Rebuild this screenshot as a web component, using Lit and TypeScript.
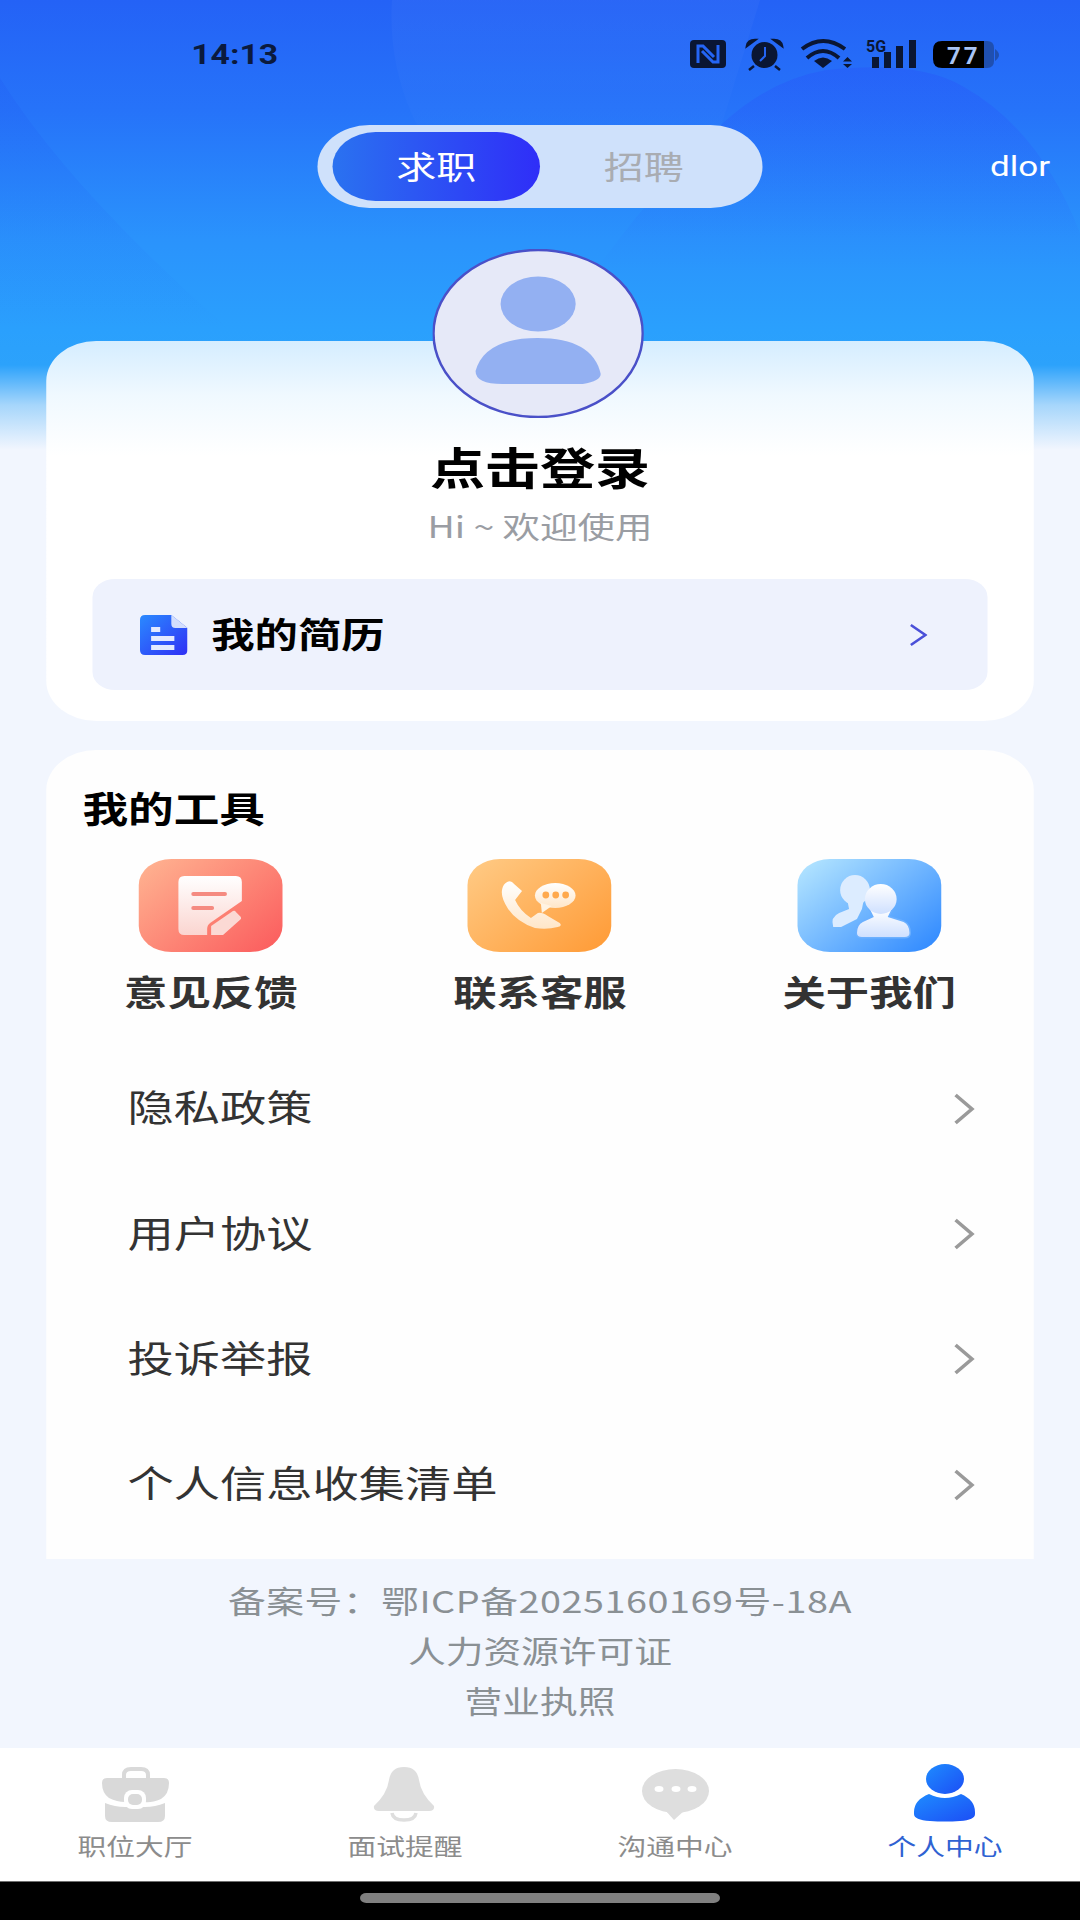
import { LitElement, html, css } from 'lit';
import { customElement } from 'lit/decorators.js';

// The reference is a tall phone capture squeezed to 1080x1920, so everything looks
// 1.25x wider than tall. The page is laid out at 864px and stretched back on :host.
// Icon viewBoxes are in real screen pixels, with preserveAspectRatio none.

const docIcon = html`<svg class="doc-icon" viewBox="0 0 47 40" preserveAspectRatio="none">
  <defs><linearGradient id="docFill" x1="0" y1="0" x2="1" y2="1">
    <stop offset="0" stop-color="#2a8aff"/><stop offset="1" stop-color="#3030f5"/>
  </linearGradient></defs>
  <path d="M5 0H31L47 13V35Q47 40 42 40H5Q0 40 0 35V5Q0 0 5 0Z" fill="url(#docFill)"/>
  <path d="M31 0L47 13H35Q31 13 31 9Z" fill="#d3defd"/>
  <rect x="11" y="12" width="9" height="5" fill="#e3e9ff"/>
  <rect x="11" y="21" width="23" height="5" fill="#e3e9ff"/>
  <rect x="11" y="30" width="23" height="5" fill="#e3e9ff"/>
</svg>`;

const tools = [
  {
    label: '意见反馈',
    cls: 'red',
    icon: html`<svg class="tile-art" viewBox="0 0 145 93" preserveAspectRatio="none">
      <defs><linearGradient id="paperRed" x1="0" y1="0" x2="0" y2="1">
        <stop offset="0" stop-color="#fff"/><stop offset="1" stop-color="#fbd5d0"/>
      </linearGradient></defs>
      <path d="M46 17H98Q104 17 104 23V42L72 64Q69 66 69 70V76H46Q40 76 40 70V23Q40 17 46 17Z" fill="url(#paperRed)"/>
      <path d="M55 35H87M55 49H74" stroke="#f58a80" stroke-width="4" stroke-linecap="round" fill="none"/>
      <path d="M73 76V67L95 52Q97 51 98 53L103 58Q104 60 102 61L85 76Z" fill="#fbd9d4"/>
    </svg>`,
  },
  {
    label: '联系客服',
    cls: 'orange',
    icon: html`<svg class="tile-art" viewBox="0 0 145 93" preserveAspectRatio="none">
      <defs><linearGradient id="paperOrange" x1="0" y1="0" x2="0" y2="1">
        <stop offset="0" stop-color="#fff"/><stop offset="1" stop-color="#ffe6c8"/>
      </linearGradient></defs>
      <path d="M40 23Q44 21 47 25L55 32Q51 37 48 41Q53 52 64 59L71 54Q75 53 81 57L93 64Q96 67 91 68Q80 71 68 69Q50 63 41 50Q33 38 35 30Q36 25 40 23Z" fill="url(#paperOrange)"/>
      <ellipse cx="88.500" cy="36.500" rx="20.500" ry="12.500" fill="url(#paperOrange)"/>
      <path d="M74 44L75 54L85 47Z" fill="#fff3e3"/>
      <circle cx="79" cy="36" r="3.400" fill="#ffa94d"/>
      <circle cx="89" cy="36" r="3.400" fill="#ffa94d"/>
      <circle cx="99" cy="36" r="3.400" fill="#ffa94d"/>
    </svg>`,
  },
  {
    label: '关于我们',
    cls: 'blue',
    icon: html`<svg class="tile-art" viewBox="0 0 145 93" preserveAspectRatio="none">
      <defs><linearGradient id="paperBlue" x1="0" y1="0" x2="0" y2="1">
        <stop offset="0" stop-color="#fff"/><stop offset="1" stop-color="#cfe0ff"/>
      </linearGradient></defs>
      <ellipse cx="58" cy="31" rx="15" ry="15" fill="#dcecff"/>
      <path d="M36 68Q33 58 42 54L52 50L50 40H67L65 50L60 60L48 66L44 68Z" fill="#dcecff"/>
      <g stroke="#6cb0ff" stroke-width="3" paint-order="stroke">
        <path d="M60 74Q60 66 66 63L77 58Q75 54 73 50H95Q93 54 91 58L107 63Q113 66 113 74Q113 78 108 78H65Q60 78 60 74Z" fill="url(#paperBlue)"/>
        <ellipse cx="84" cy="40" rx="16" ry="15" fill="url(#paperBlue)" stroke="none"/>
      </g>
    </svg>`,
  },
];

const links = ['隐私政策', '用户协议', '投诉举报', '个人信息收集清单'];

const tabs = [
  {
    label: '职位大厅',
    active: false,
    icon: html`<svg class="tab-icon" viewBox="0 0 80 58" preserveAspectRatio="none">
      <path d="M29 15V11Q29 5 36 5H46Q53 5 53 11V15" fill="none" stroke="#d9d9d9" stroke-width="4"/>
      <path d="M12 14H69Q74 14 74 19Q74 30 66 35Q56 39 50 38H30Q22 38 14 34Q7 29 7 19Q7 14 12 14Z" fill="#d9d9d9"/>
      <path d="M10 39Q20 43 30 43H50Q60 43 70 39V52Q70 58 63 58H17Q10 58 10 52Z" fill="#d9d9d9"/>
      <rect x="29" y="26" width="22" height="19" rx="8" fill="#fff"/>
      <rect x="33" y="30" width="14" height="11" rx="5" fill="#d9d9d9"/>
    </svg>`,
  },
  {
    label: '面试提醒',
    active: false,
    icon: html`<svg class="tab-icon" viewBox="0 0 80 58" preserveAspectRatio="none">
      <path d="M39 3Q52 3 54 16Q56 30 69 42Q70 47 64 47H14Q8 47 9 42Q22 30 24 16Q26 3 39 3Z" fill="#dedede"/>
      <path d="M27 49Q28 56 39 56Q50 56 51 49" fill="none" stroke="#dedede" stroke-width="3.500"/>
    </svg>`,
  },
  {
    label: '沟通中心',
    active: false,
    icon: html`<svg class="tab-icon" viewBox="0 0 80 58" preserveAspectRatio="none">
      <ellipse cx="40.500" cy="27" rx="33.500" ry="22" fill="#dedede"/>
      <path d="M30 46H50L39 56Z" fill="#dedede"/>
      <ellipse cx="24" cy="25" rx="4.500" ry="3" fill="#fff"/>
      <ellipse cx="41" cy="25" rx="4.500" ry="3" fill="#fff"/>
      <ellipse cx="57" cy="25" rx="4.500" ry="3" fill="#fff"/>
    </svg>`,
  },
  {
    label: '个人中心',
    active: true,
    icon: html`<svg class="tab-icon" viewBox="0 0 80 58" preserveAspectRatio="none">
      <defs><linearGradient id="meFill" x1="0" y1="0" x2="1" y2="1">
        <stop offset="0" stop-color="#1e8cff"/><stop offset="1" stop-color="#1c4ef5"/>
      </linearGradient></defs>
      <ellipse cx="40" cy="15" rx="19" ry="15" fill="url(#meFill)"/>
      <path d="M9 48Q9 36 24 30Q40 38 56 30Q70 36 70 48V50Q70 56 55 57Q40 58 25 57Q9 56 9 50Z" fill="url(#meFill)"/>
    </svg>`,
  },
];

@customElement('app-root')
export class AppRoot extends LitElement {
  static styles = css`
    :host {
      display: block;
      width: 864px;
      height: 1920px;
      transform: scaleX(1.25);
      transform-origin: 0 0;
      font-family: "Noto Sans CJK SC", "Noto Sans", sans-serif;
    }
    .page {
      position: relative;
      display: flex;
      flex-direction: column;
      height: 1920px;
      overflow: hidden;
      background: #f2f6fe;
    }
    .backdrop {
      position: absolute;
      top: 0;
      left: 0;
      width: 100%;
      height: 470px;
      background: linear-gradient(180deg, #2462f6 0, #2673f9 110px, #2a93fc 240px, #2aa0fd 330px, #2ca2fb 365px, #a6d6fb 405px, #f2f6fe 450px);
    }
    .backdrop svg {
      display: block;
      width: 100%;
      height: 100%;
    }
    .status, .switch-row, .card, .tools-card, .footer, .tabbar, .navbar {
      position: relative;
    }

    .status {
      display: flex;
      align-items: center;
      justify-content: space-between;
      height: 108px;
      padding: 0 64px 0 153px;
      box-sizing: border-box;
    }
    .time {
      margin-top: 2px;
      font-family: Roboto, sans-serif;
      font-size: 27px;
      font-weight: 700;
      color: #0b1a3d;
    }
    .status-icons {
      width: 248px;
      height: 34px;
    }
    .status-icons text {
      font-family: Roboto, sans-serif;
      font-weight: 700;
    }

    .switch-row {
      display: grid;
      grid-template-columns: 1fr 356px 1fr;
      align-items: center;
      height: 83px;
      margin-top: 17px;
    }
    .switch {
      grid-column: 2;
      display: flex;
      align-items: center;
      height: 83px;
      padding: 0 12px;
      box-sizing: border-box;
      border-radius: 42px;
      background: #cfe1fb;
    }
    .switch span {
      width: 166px;
      height: 69px;
      line-height: 67px;
      border-radius: 35px;
      text-align: center;
      font-size: 32px;
      color: #a9acb2;
    }
    .switch .on {
      color: #fff;
      background: linear-gradient(90deg, #2a72f0, #2f2ef8);
    }
    .user {
      grid-column: 3;
      justify-self: end;
      padding-right: 24px;
      font-family: Roboto, sans-serif;
      font-size: 28px;
      color: #fff;
    }

    .card {
      display: flex;
      flex-direction: column;
      align-items: center;
      height: 380px;
      margin: 133px 37px 0;
      border-radius: 40px;
      background: linear-gradient(180deg, #d5edff 0, #f0f9ff 55px, #fff 115px);
    }
    .avatar {
      width: 169px;
      height: 169px;
      margin: -92px 3px 0 0;
      flex: none;
    }
    .name {
      margin-top: 18px;
      height: 60px;
      line-height: 60px;
      font-size: 44px;
      font-weight: 700;
      color: #000;
    }
    .hello {
      margin-top: 9px;
      height: 40px;
      line-height: 40px;
      font-size: 30px;
      color: #9a9da3;
    }
    .resume {
      display: flex;
      align-items: center;
      align-self: stretch;
      height: 111px;
      margin: 34px 37px 0;
      padding: 0 48px 0 38px;
      box-sizing: border-box;
      border-radius: 18px;
      background: #eef2fd;
    }
    .doc-icon {
      width: 38px;
      height: 40px;
      flex: none;
    }
    .resume-label {
      margin-left: 19px;
      padding-bottom: 4px;
      flex: 1;
      font-size: 34.700px;
      font-weight: 700;
      color: #000;
    }
    .resume-arrow {
      width: 15px;
      height: 24px;
    }

    .tools-card {
      height: 809px;
      margin: 29px 37px 0;
      padding-top: 33px;
      box-sizing: border-box;
      border-radius: 40px 40px 0 0;
      background: #fefefe;
    }
    .tools-title {
      height: 50px;
      line-height: 50px;
      padding-left: 29px;
      font-size: 36.500px;
      font-weight: 700;
      color: #000;
    }
    .tools {
      display: grid;
      grid-template-columns: repeat(3, 1fr);
      margin-top: 26px;
    }
    .tool {
      display: flex;
      flex-direction: column;
      align-items: center;
    }
    .tile {
      width: 115px;
      height: 93px;
      border-radius: 26px;
    }
    .tile.red { background: linear-gradient(135deg, #ffb592, #fb5a5c); }
    .tile.orange { background: linear-gradient(135deg, #ffcb86, #ff9a35); }
    .tile.blue { background: linear-gradient(135deg, #b8e8ff, #2b86ff); }
    .tile-art {
      display: block;
      width: 100%;
      height: 100%;
    }
    .tool-label {
      margin-top: 17px;
      height: 44px;
      line-height: 44px;
      font-size: 34.700px;
      font-weight: 700;
      color: #333;
    }
    .links {
      margin-top: 33px;
    }
    .link {
      display: flex;
      align-items: center;
      justify-content: space-between;
      height: 125.400px;
      padding: 0 47px 0 65px;
      font-size: 37px;
      color: #333;
    }
    .link span {
      padding-bottom: 5px;
    }
    .link-arrow {
      width: 18px;
      height: 32px;
    }

    .footer {
      margin-top: 16px;
      text-align: center;
      font-size: 30.200px;
      line-height: 50px;
      color: #8a9094;
    }
    .icp {
      letter-spacing: .45px;
    }

    .tabbar {
      display: grid;
      grid-template-columns: repeat(4, 1fr);
      height: 133px;
      margin-top: auto;
      padding-top: 16px;
      box-sizing: border-box;
      background: #fff;
    }
    .tab {
      display: flex;
      flex-direction: column;
      align-items: center;
    }
    .tab-icon {
      width: 64px;
      height: 58px;
    }
    .tab-label {
      margin-top: 8px;
      line-height: 30px;
      font-size: 23px;
      color: #8c8c8c;
    }
    .tab.active .tab-label {
      color: #2f62d2;
    }

    .navbar {
      display: flex;
      justify-content: center;
      height: 39px;
      padding-top: 11px;
      box-sizing: border-box;
      border-top: 1px solid #6e6e6e;
      background: #000;
    }
    .pill {
      width: 288px;
      height: 10px;
      border-radius: 5px;
      background: #808080;
    }
  `;

  private renderBackdrop() {
    return html`<div class="backdrop">
      <svg viewBox="0 0 1080 470" preserveAspectRatio="none">
        <defs>
          <linearGradient id="fadeDark" x1="0" y1="0" x2="0" y2="1">
            <stop offset="0" stop-color="#1e50f0" stop-opacity=".16"/>
            <stop offset="1" stop-color="#1e50f0" stop-opacity="0"/>
          </linearGradient>
          <linearGradient id="fadeLight" x1="0" y1="0" x2="0" y2="1">
            <stop offset="0" stop-color="#fff" stop-opacity=".03"/>
            <stop offset="1" stop-color="#fff" stop-opacity="0"/>
          </linearGradient>
          <linearGradient id="fadeMound" x1="0" y1="0" x2="0" y2="1">
            <stop offset="0" stop-color="#2a3cf8" stop-opacity=".2"/>
            <stop offset=".75" stop-color="#2a3cf8" stop-opacity="0"/>
          </linearGradient>
        </defs>
        <path d="M0 78Q70 190 230 330H0Z" fill="url(#fadeDark)"/>
        <path d="M392 0Q385 110 470 200L720 130L760 0Z" fill="url(#fadeLight)"/>
        <path d="M560 320Q650 190 723 123Q770 80 826 70Q920 60 964 87Q1040 130 1080 233V340H560Z" fill="url(#fadeMound)"/>
      </svg>
    </div>`;
  }

  private renderStatus() {
    return html`<div class="status">
      <span class="time">14:13</span>
      <svg class="status-icons" viewBox="0 0 310 34" preserveAspectRatio="none">
        <rect x="0" y="3" width="36" height="28" rx="4" fill="#0a1633"/>
        <path d="M8 26V9H13L24 20M28 8V25H23L12 14" fill="none" stroke="#2465f5" stroke-width="3"/>
        <circle cx="74.500" cy="18" r="13" fill="#0a1633"/>
        <path d="M57 9Q58 3 65 3ZM92 9Q91 3 84 3ZM64 29L59 33M85 29L90 33" fill="#0a1633" stroke="#0a1633" stroke-width="2.500"/>
        <path d="M75 10V19L70 24" fill="none" stroke="#2465f5" stroke-width="2"/>
        <path d="M112 12Q133 -4 155 12M117 21Q133 7 149 21" fill="none" stroke="#0a1633" stroke-width="4"/>
        <path d="M133 31L124 24Q133 17 142 24Z" fill="#0a1633"/>
        <path d="M157.500 20L153 24.500H162ZM153 27H162L157.500 31Z" fill="#0a1633"/>
        <text x="176" y="15" font-size="16" fill="#0a1633">5G</text>
        <path d="M182 20h7v11h-7ZM194 15h7v16h-7ZM206 9h7v22h-7ZM219 3h7v28h-7Z" fill="#0a1633"/>
        <path d="M294 4H297Q304 4 304 11V24Q304 31 297 31H294ZM305 12Q309 15 309 18Q309 21 305 24Z" fill="#1f4fb0"/>
        <path d="M252 4H294V31H252Q243 31 243 22V13Q243 4 252 4Z" fill="#000"/>
        <text x="257" y="26.500" font-size="24" letter-spacing="3" fill="#a8c4f5">77</text>
      </svg>
    </div>`;
  }

  private renderProfile() {
    return html`<div class="card">
      <svg class="avatar" viewBox="0 0 211 169" preserveAspectRatio="none">
        <ellipse cx="105.500" cy="84.500" rx="104.500" ry="83.500" fill="#e6e9f8" stroke="#4a50c8" stroke-width="2.500"/>
        <ellipse cx="105.500" cy="55" rx="37.500" ry="27.500" fill="#93b0f2"/>
        <path d="M43 122Q52 89 105 89Q160 89 168 125Q168 132 150 135H70Q43 135 43 122Z" fill="#93b0f2"/>
      </svg>
      <div class="name">点击登录</div>
      <div class="hello">Hi ~ 欢迎使用</div>
      <div class="resume">
        ${docIcon}
        <span class="resume-label">我的简历</span>
        <svg class="resume-arrow" viewBox="0 0 18 24" preserveAspectRatio="none">
          <path d="M2 2L16 12L2 22" fill="none" stroke="#4a50d8" stroke-width="2.500"/>
        </svg>
      </div>
    </div>`;
  }

  private renderTools() {
    return html`<div class="tools-card">
      <div class="tools-title">我的工具</div>
      <div class="tools">
        ${tools.map(t => html`
          <div class="tool">
            <div class="tile ${t.cls}">${t.icon}</div>
            <div class="tool-label">${t.label}</div>
          </div>
        `)}
      </div>
      <div class="links">
        ${links.map(label => html`
          <div class="link">
            <span>${label}</span>
            <svg class="link-arrow" viewBox="0 0 22 32" preserveAspectRatio="none">
              <path d="M3 2L19 16L3 30" fill="none" stroke="#9a9a9a" stroke-width="3.500"/>
            </svg>
          </div>
        `)}
      </div>
    </div>`;
  }

  render() {
    return html`<div class="page">
      ${this.renderBackdrop()}
      ${this.renderStatus()}
      <div class="switch-row">
        <div class="switch"><span class="on">求职</span><span>招聘</span></div>
        <span class="user">dlor</span>
      </div>
      ${this.renderProfile()}
      ${this.renderTools()}
      <div class="footer">
        <div class="icp">备案号：鄂ICP备2025160169号-18A</div>
        <div>人力资源许可证</div>
        <div>营业执照</div>
      </div>
      <div class="tabbar">
        ${tabs.map(t => html`
          <div class="tab ${t.active ? 'active' : ''}">
            ${t.icon}
            <span class="tab-label">${t.label}</span>
          </div>
        `)}
      </div>
      <div class="navbar"><div class="pill"></div></div>
    </div>`;
  }
}
